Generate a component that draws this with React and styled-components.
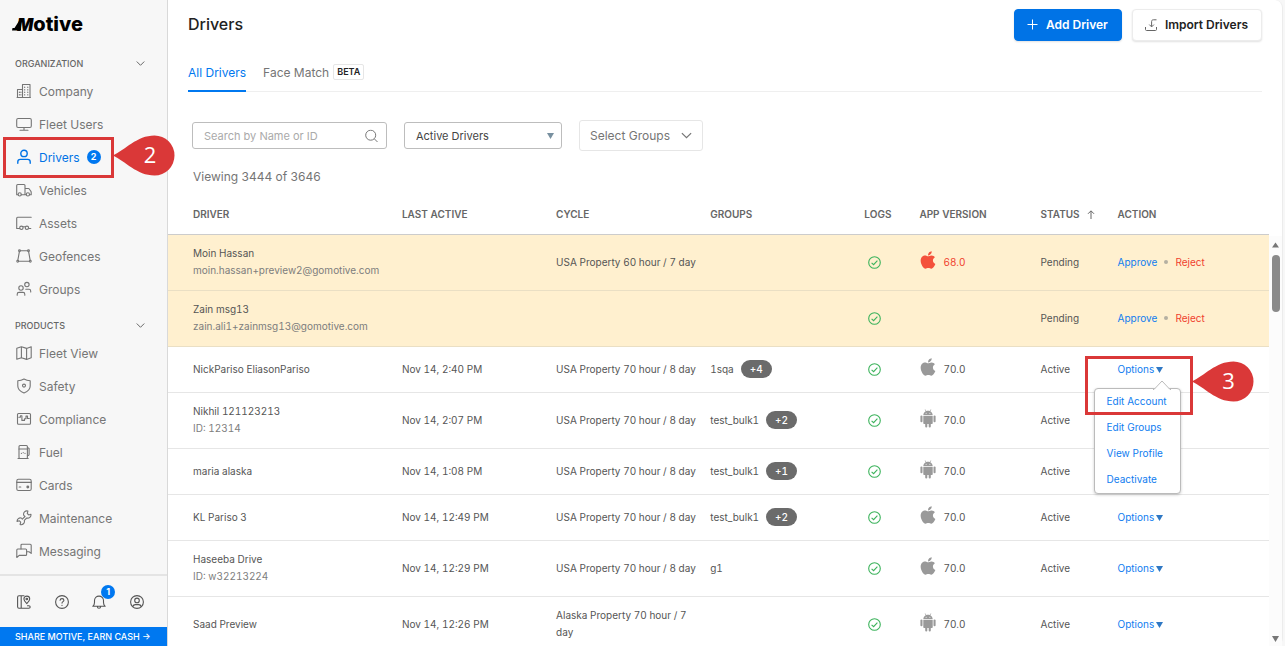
import { useState } from "react";
import styled, { createGlobalStyle, css } from "styled-components";
import { FaApple } from "react-icons/fa";

const GlobalStyle = createGlobalStyle`
  *,
  *::before,
  *::after {
    box-sizing: border-box;
  }

  body {
    margin: 0;
    background-color: #f7f7f7;
    color: #555;
    font-family: Inter, "Liberation Sans", sans-serif;
    font-size: 10px;
    line-height: 17px;
  }

  button,
  input,
  select {
    font-family: inherit;
  }

  a {
    text-decoration: none;
  }
`;

// --- Layout ---
const Page = styled.div`
  display: flex;
  height: 100vh;
  overflow: hidden;
`;

const Sidebar = styled.aside`
  display: flex;
  flex-direction: column;
  flex: 0 0 168px;
  background-color: #f7f7f7;
  border-right: 1px solid #d9d9d9;
`;

const Main = styled.main`
  display: flex;
  flex-direction: column;
  flex: 1;
  min-width: 0;
  margin-right: 2px;
  background-color: #fff;
  border-right: 1px solid #ececec;
  border-radius: 0 8px 8px 0;
`;

// --- Sidebar ---
const Brand = styled.a`
  display: flex;
  align-items: center;
  height: 52px;
  padding: 0 0 4px 12px;
  color: #000;
`;

const BrandTail = styled.svg`
  width: 9px;
  height: 16px;
  margin-right: -4px;
`;

const BrandName = styled.span`
  font-size: 20px;
  font-weight: 800;
  line-height: 24px;

  em {
    font-size: 17px;
    font-weight: 900;
  }
`;

const Nav = styled.nav`
  flex: 1;
`;

const NavHeading = styled.button`
  display: flex;
  align-items: center;
  justify-content: space-between;
  width: 100%;
  height: 22px;
  margin-top: ${(props) => (props.$spaced ? "9px" : "0")};
  padding: 0 22px 0 15px;
  border: 0;
  background: none;
  color: #666;
  font-size: 9px;
  font-weight: 500;
`;

const NavList = styled.ul`
  margin: 0;
  padding: 0;
  list-style: none;
`;

const NavItem = styled.li`
  position: relative;
`;

const NavLink = styled.a`
  display: flex;
  align-items: center;
  gap: 7px;
  height: 33px;
  padding: 1px 0 0 16px;
  color: ${(props) => (props.$active ? "#0073e6" : "#757575")};
  font-size: 12px;

  svg {
    margin-bottom: 1px;
  }
`;

const NavBadge = styled.span`
  width: 14px;
  height: 14px;
  border-radius: 50%;
  background-color: #0078f0;
  color: #fff;
  font-size: 9px;
  font-weight: 700;
  line-height: 14px;
  text-align: center;
`;

const SidebarTools = styled.div`
  display: flex;
  align-items: center;
  justify-content: space-between;
  height: 53px;
  padding: 0 22px 0 16px;
  border-top: 2px solid #e4e4e4;
`;

const ToolButton = styled.button`
  position: relative;
  display: flex;
  padding: 0;
  border: 0;
  background: none;
  color: #555;
`;

const ToolBadge = styled(NavBadge)`
  position: absolute;
  top: -9px;
  left: 10px;
`;

const ShareLink = styled.a`
  height: 19px;
  padding-left: 15px;
  background-color: #0078f0;
  color: #fff;
  font-size: 9px;
  font-weight: 500;
  line-height: 20px;
`;

// --- Page header ---
const Header = styled.header`
  display: flex;
  align-items: center;
  justify-content: space-between;
  height: 49px;
  padding: 0 20px;
`;

const Title = styled.h1`
  margin: 0;
  color: #222;
  font-size: 16px;
  font-weight: 500;
`;

const HeaderActions = styled.div`
  display: flex;
  gap: 10px;
`;

const ActionButton = styled.button`
  display: flex;
  align-items: center;
  justify-content: center;
  gap: 8px;
  height: 32px;
  padding: 0 13px 0 12px;
  border: 1px solid ${(props) => (props.$primary ? "#0073e6" : "#ececec")};
  border-radius: 4px;
  background-color: ${(props) => (props.$primary ? "#0073e6" : "#fff")};
  color: ${(props) => (props.$primary ? "#fff" : "#222")};
  box-shadow: 0 1px 2px rgba(0, 0, 0, 0.12);
  font-size: 12px;
  font-weight: 600;
`;

const Tabs = styled.nav`
  display: flex;
  gap: 17px;
  height: 43px;
  margin: 0 20px;
  border-bottom: 1px solid #efefef;
`;

const Tab = styled.a`
  display: flex;
  align-items: center;
  gap: 4px;
  height: 43px;
  padding-top: 5px;
  border-bottom: 2px solid ${(props) => (props.$active ? "#0078f0" : "transparent")};
  color: ${(props) => (props.$active ? "#0078f0" : "#757575")};
  font-size: 12px;
`;

const BetaTag = styled.span`
  padding: 0 3px;
  border: 1px solid #e6e6e6;
  border-radius: 2px;
  color: #222;
  font-size: 9px;
  font-weight: 600;
  line-height: 14px;
`;

// --- Filters ---
const Filters = styled.div`
  display: flex;
  align-items: center;
  gap: 17px;
  padding: 28px 24px 0;
`;

const fieldBox = css`
  width: 100%;
  height: 27px;
  border: 1px solid #bdbdbd;
  border-radius: 3px;
  background-color: #fff;
  font-size: 11px;
`;

const Field = styled.label`
  position: relative;
  width: ${(props) => props.$width};

  svg {
    position: absolute;
    top: 50%;
    right: ${(props) => props.$iconRight};
    transform: translateY(-50%);
    pointer-events: none;
  }
`;

const SearchInput = styled.input`
  ${fieldBox}
  padding: 0 30px 0 11px;
  color: #555;

  &::placeholder {
    color: #aaa;
    opacity: 1;
  }
`;

const StatusSelect = styled.select`
  ${fieldBox}
  padding: 0 24px 0 11px;
  appearance: none;
  color: #444;
`;

const GroupsButton = styled.button`
  display: flex;
  align-items: center;
  gap: 11px;
  height: 31px;
  padding: 0 10px;
  border: 1px solid #e6e6e6;
  border-radius: 3px;
  background-color: #fff;
  color: #757575;
  font-size: 12px;
`;

const Summary = styled.p`
  height: 44px;
  margin: 0;
  padding: 17px 25px 0;
  color: #757575;
  font-size: 12px;
`;

// --- Table ---
const TableArea = styled.div`
  display: flex;
  flex: 1;
  min-height: 0;
`;

const TableClip = styled.div`
  flex: 1;
  overflow: hidden;
`;

const Table = styled.table`
  width: 100%;
  border-spacing: 0;
  table-layout: fixed;
  font-variant-numeric: tabular-nums;
`;

const HeadCell = styled.th`
  height: 40px;
  padding: 0;
  border-bottom: 1px solid #ccc;
  color: #666;
  font-size: 10px;
  font-weight: 600;
  text-align: left;

  &:first-child {
    padding-left: 25px;
  }

  svg {
    margin-left: 7px;
    vertical-align: -1px;
  }
`;

const Row = styled.tr`
  height: 46px;
  background-color: ${(props) => (props.$pending ? "#fff0cf" : "#fff")};
`;

const Cell = styled.td`
  padding: 10px 8px 11px 0;
  border-bottom: 1px solid #e6e6e6;
  vertical-align: middle;

  ${Row}[data-pending="true"] & {
    border-bottom-color: #eadfc4;
  }

  &:first-child {
    padding-left: 25px;
  }
`;

const DriverNote = styled.div`
  color: #7d7d7d;
`;

const Inline = styled.div`
  display: flex;
  align-items: center;
  gap: ${(props) => props.$gap || "7px"};
  height: 17px;
  color: ${(props) => props.$color || "inherit"};
`;

const CountPill = styled.span`
  padding: 0 9px;
  border-radius: 9px;
  background-color: #6b6b6b;
  color: #fff;
  font-weight: 500;
  line-height: 18px;
`;

const LogsMark = styled.span`
  display: flex;
  padding-left: 4px;
`;

const Platform = styled.span`
  display: flex;
  justify-content: center;
  width: 17px;
  padding-bottom: 4px;
  color: ${(props) => (props.$outdated ? "#f4513b" : "#999")};

  svg {
    flex-shrink: 0;
  }
`;

const TextButton = styled.button`
  padding: 0;
  border: 0;
  background: none;
  color: ${(props) => (props.$danger ? "#f0412e" : "#0f7df0")};
  font-size: 10px;
  line-height: 17px;

  svg {
    margin-left: 2px;
  }
`;

const Bullet = styled.span`
  width: 4px;
  height: 4px;
  border-radius: 50%;
  background-color: #b5b0a2;
`;

const MenuAnchor = styled.div`
  position: relative;
  width: max-content;
`;

const Menu = styled.ul`
  position: absolute;
  top: 27px;
  left: -24px;
  z-index: 2;
  width: 87px;
  margin: 0;
  padding: 0;
  border: 1px solid #bbb;
  border-radius: 4px;
  background-color: #fff;
  box-shadow: 0 1px 3px rgba(0, 0, 0, 0.2);
  list-style: none;
`;

const MenuArrow = styled.svg`
  position: absolute;
  top: -9px;
  right: 9px;
`;

const MenuItem = styled.li`
  display: flex;
  align-items: center;
  height: 26px;
  padding-left: 12px;
`;

const Scrollbar = styled.div`
  display: flex;
  flex-direction: column;
  align-items: center;
  width: 13px;
  margin-top: 41px;
  padding: 6px 0 4px;
  background-color: #fcfcfc;
`;

const ScrollThumb = styled.div`
  width: 8px;
  height: 57px;
  margin: 7px 0 auto;
  border-radius: 4px;
  background-color: #8a8a8a;
`;

// --- Step callouts ---
const Callout = styled.div`
  position: absolute;
  top: ${(props) => props.$top};
  left: ${(props) => props.$left};
  z-index: 3;
  width: ${(props) => props.$width};
  height: ${(props) => props.$height};
  border: 3px solid #da3838;
  pointer-events: none;
`;

const CalloutPin = styled.div`
  position: absolute;
  top: ${(props) => props.$top};
  left: calc(100% + 2px);
  width: 62px;
  height: 41px;
  padding-left: 12px;
  color: #fff;
  font-family: "Open Sans", sans-serif;
  font-size: 22px;
  line-height: 39px;
  text-align: center;

  svg {
    position: absolute;
    inset: 0;
  }

  span {
    position: relative;
  }
`;

// --- Icons ---
const Icon = ({ size = 16, children }) => (
  <svg
    width={size}
    height={size}
    viewBox="0 0 16 16"
    fill="none"
    stroke="currentColor"
    strokeWidth="1.1"
    strokeLinecap="round"
    strokeLinejoin="round"
    aria-hidden="true"
  >
    {children}
  </svg>
);

const Chevron = ({ size = 9 }) => (
  <svg width={size} height={size} viewBox="0 0 10 10" fill="none" stroke="currentColor" strokeWidth="1.1" aria-hidden="true">
    <path d="M0.8 2.8 5 7 9.2 2.8" />
  </svg>
);

const Triangle = ({ color = "#2f78c4", up, width = 7 }) => (
  <svg width={width} height="6" viewBox="0 0 7 6" fill={color} aria-hidden="true">
    <path d={up ? "M0 5.5h7L3.5 0.5z" : "M0 0h7L3.5 6z"} />
  </svg>
);

const CheckCircle = () => (
  <svg width="13" height="13" viewBox="0 0 13 13" fill="none" stroke="#3cb35c" strokeWidth="1.1" aria-label="OK">
    <circle cx="6.5" cy="6.5" r="5.8" />
    <path d="M3.6 6.8 5.6 8.7 9.4 4.6" />
  </svg>
);

const AndroidIcon = () => (
  <svg width="16" height="19" viewBox="0 0 16 19" fill="currentColor" aria-hidden="true">
    <path d="M3.3 6.2C3.4 4.200 4.400 2.900 5.700 2.200L4.700.6l.4-.3 1.100 1.700c1.100-.4 2.500-.4 3.600 0L10.900.3l.4.3-1 1.600c1.300.7 2.300 2 2.400 4z" />
    <path d="M3.300 6.900h9.400v7c0 .6-.4 1-1 1h-.9v2.600a1 1 0 0 1-2.100 0v-2.600H7.300v2.600a1 1 0 0 1-2.100 0v-2.600h-.9c-.6 0-1-.4-1-1z" />
    <rect x="0.400" y="6.600" width="2.100" height="6.600" rx="1" />
    <rect x="13.500" y="6.600" width="2.100" height="6.600" rx="1" />
    <circle cx="6.100" cy="4.200" r="0.500" fill="#fff" />
    <circle cx="9.900" cy="4.200" r="0.500" fill="#fff" />
  </svg>
);

const icons = {
  company: (
    <>
      <path d="M1.5 14.5v-8h5v8M6.5 14.5v-13h7.5v13M1 14.5h13.5" />
      <path d="M3.4 9v.5M3.4 11.5v.5M4.9 9v.5M4.9 11.5v.5M8.7 4v.4M8.7 6.5v.4M8.7 9v.4M8.7 11.5v.4M11.8 4v.4M11.8 6.5v.4M11.8 9v.4M11.8 11.5v.4" />
    </>
  ),
  monitor: (
    <>
      <rect x="0.7" y="2.5" width="14.6" height="9" rx="1.4" />
      <path d="M8 11.5v2.8M4 14.3h8" />
    </>
  ),
  user: (
    <g strokeWidth="1.4">
      <circle cx="8" cy="4.4" r="3.2" />
      <path d="M1.8 14.2v-1.4c0-1.5 1-2.4 2.5-2.4h7.4c1.5 0 2.5.9 2.5 2.4v1.4" />
    </g>
  ),
  truck: (
    <>
      <path d="M2 12.7H.7V3.5c0-.6.4-1 1-1H8c.6 0 1 .4 1 1v9.2M5.2 12.7h5M9 6.5h3.4c.4 0 .7.2.9.5l1.5 2.2c.3.4.4.7.4 1.2v2.3h-1.6" />
      <circle cx="3.7" cy="12.4" r="1.6" />
      <circle cx="11.9" cy="12.4" r="1.6" />
    </>
  ),
  trailer: (
    <>
      <path d="M15.2 2.3H1.6c-.5 0-.9.4-.9.9v10.3h2.8M14.8 13.5h-1.5M7.3 11.8h1.5" />
      <circle cx="5.4" cy="12.8" r="1.7" />
      <circle cx="10.9" cy="12.8" r="1.7" />
    </>
  ),
  geofence: (
    <>
      <path d="M4.2 2.8h7.6M3.4 3.7 1.8 12.3M12.6 3.7l1.6 8.6M2.6 13.3h10.8" />
      <circle cx="3.5" cy="2.8" r="0.9" />
      <circle cx="12.5" cy="2.8" r="0.9" />
      <circle cx="1.7" cy="13.3" r="0.9" />
      <circle cx="14.3" cy="13.3" r="0.9" />
    </>
  ),
  groups: (
    <>
      <circle cx="5" cy="7" r="2.2" />
      <path d="M1.2 14.3v-1.1c0-1 .7-1.8 1.8-1.8h4c1.1 0 1.8.8 1.8 1.8v1.1" />
      <circle cx="10.9" cy="3.6" r="2.2" />
      <path d="M9.8 8.2H13c1 0 1.700.7 1.700 1.700v1" />
    </>
  ),
  map: (
    <path d="M0.8 3.2 5.4 1.8l5.2 1.6 4.6-1.6v11L10.6 14.4 5.4 12.8.8 14.3zM5.4 1.8v11M10.6 3.4v11" />
  ),
  shield: (
    <>
      <path d="M8 1.1c2 1.1 3.9 1.6 6.2 1.7v5.3c0 3.3-2.6 5.6-6.2 6.9-3.6-1.3-6.2-3.6-6.2-6.9V2.8C4.1 2.7 6 2.2 8 1.1z" />
      <circle cx="8" cy="7.6" r="1.5" />
    </>
  ),
  compliance: (
    <>
      <rect x="1.5" y="2.5" width="13" height="10.8" rx="1" />
      <path d="M2.8 6.2h1.6v-1.4h1.5v4.6h2.6V7.8H10v-2.7h1.5v2.4h1.8" />
    </>
  ),
  fuel: (
    <>
      <rect x="3" y="1.5" width="8.4" height="13" rx="1" />
      <path d="M3 5h8.4M2 14.5h10.2M5.4 9.2v.3M7.2 8.6v.2M9 9.2v.3M11.4 3.5l1.7 1v6c0 .8-.6 1.2-1.7 1.2" />
    </>
  ),
  card: (
    <>
      <rect x="0.8" y="2.3" width="14.4" height="11.2" rx="1.6" />
      <path d="M0.8 5.4h14.4M3.2 10h1.6" />
      <circle cx="11.8" cy="10" r="0.9" fill="currentColor" />
    </>
  ),
  wrench: (
    <path d="M11.900 1.100a3.300 3.300 0 0 0-4.100 4.300L9 6.500 6.300 9.100 5.300 8a3.300 3.300 0 0 0-4.200 3.400l2.300-.6 1.300 1.300-.6 2.400a3.300 3.300 0 0 0 4.200-4.100L10.700 8a3.300 3.300 0 0 0 4.200-3.800l-2.200.7-1.400-1.400z" />
  ),
  messages: (
    <>
      <path d="M5 5.9V2.2c0-.6.4-1 1-1h8.2c.6 0 1 .4 1 1v8.200l-2.200-1.600h-1.900" />
      <path d="M0.8 14.5V7c0-.6.4-1 1-1h7.800c.6 0 1 .4 1 1v4.400c0 .6-.4 1-1 1H3.200z" />
    </>
  ),
  guide: (
    <>
      <path d="M8 1.8H3c-.8 0-1.400.6-1.400 1.400v9.600c0 .8.6 1.400 1.400 1.400h9.800c.8 0 1.400-.5 1.400-1.200s-.6-1.200-1.400-1.200h-1.300M5.200 1.800v12.400" />
      <path d="M10.800 9.600C9 7.900 7.900 6.500 7.900 5a2.900 2.900 0 0 1 5.800 0c0 1.500-1.100 2.900-2.900 4.600z" />
      <circle cx="10.8" cy="5" r="0.8" />
    </>
  ),
  help: (
    <>
      <circle cx="8" cy="8" r="6.4" />
      <path d="M6.100 6.300c.1-1.100.8-1.700 1.900-1.700s1.900.7 1.900 1.600c0 1.300-1.900 1.500-1.900 2.900M8 11.200v.2" />
    </>
  ),
  bell: (
    <path d="M1.800 12.300h12.400c-1.200-1-1.700-2.100-1.700-3.900V6.600a4.500 4.500 0 0 0-9 0v1.800c0 1.800-.5 2.900-1.700 3.900zM6.300 12.500c.1 1.100.8 1.800 1.700 1.800s1.600-.7 1.700-1.800" />
  ),
  account: (
    <>
      <circle cx="8" cy="8" r="6.4" />
      <circle cx="8" cy="6.4" r="2.3" />
      <path d="M3.800 12.500c.4-1.300 1.300-1.900 2.500-1.900h3.400c1.200 0 2.100.6 2.500 1.900" />
    </>
  ),
};

const ImportIcon = () => (
  <svg width="12" height="12" viewBox="0 0 12 12" fill="none" stroke="#666" aria-hidden="true">
    <path d="M0.500 8v2.500c0 .6.4 1 1 1h9c.6 0 1-.4 1-1V8M11.500 0.800H8.300c-1 0-1.700.6-1.700 1.600v5.300M4.300 5.600l2.300 2.300 2.300-2.300" />
  </svg>
);

const Pin = ({ top, children }) => (
  <CalloutPin $top={top}>
    <svg width="62" height="41" viewBox="0 0 62 41" fill="#da3838" aria-hidden="true">
      <path d="M0 20.500C12 15 24 0.500 41.500 0.500a20 20 0 0 1 0 40C24 40.500 12 26 0 20.500z" />
    </svg>
    <span>{children}</span>
  </CalloutPin>
);

// --- Data ---
const organization = [
  { label: "Company", icon: "company" },
  { label: "Fleet Users", icon: "monitor" },
  { label: "Drivers", icon: "user", badge: 2, active: true },
  { label: "Vehicles", icon: "truck" },
  { label: "Assets", icon: "trailer" },
  { label: "Geofences", icon: "geofence" },
  { label: "Groups", icon: "groups" },
];

const products = [
  { label: "Fleet View", icon: "map" },
  { label: "Safety", icon: "shield" },
  { label: "Compliance", icon: "compliance" },
  { label: "Fuel", icon: "fuel" },
  { label: "Cards", icon: "card" },
  { label: "Maintenance", icon: "wrench" },
  { label: "Messaging", icon: "messages" },
];

const columns = [
  { label: "DRIVER", width: "21.25%" },
  { label: "LAST ACTIVE", width: "14%" },
  { label: "CYCLE", width: "14%" },
  { label: "GROUPS", width: "14%" },
  { label: "LOGS", width: "5%" },
  { label: "APP VERSION", width: "11%" },
  { label: "STATUS", width: "7%", sorted: true },
  { label: "ACTION", width: "13.75%" },
];

const usa70 = "USA Property 70 hour / 8 day";

const drivers = [
  { name: "Moin Hassan", note: "moin.hassan+preview2@gomotive.com", cycle: "USA Property 60 hour / 7 day", os: "apple", version: "68.0", outdated: true, pending: true },
  { name: "Zain msg13", note: "zain.ali1+zainmsg13@gomotive.com", pending: true },
  { name: "NickPariso EliasonPariso", last: "Nov 14, 2:40 PM", cycle: usa70, group: "1sqa", more: "+4", os: "apple", version: "70.0", menuOpen: true },
  { name: "Nikhil 121123213", note: "ID: 12314", last: "Nov 14, 2:07 PM", cycle: usa70, group: "test_bulk1", more: "+2", os: "android", version: "70.0" },
  { name: "maria alaska", last: "Nov 14, 1:08 PM", cycle: usa70, group: "test_bulk1", more: "+1", os: "android", version: "70.0" },
  { name: "KL Pariso 3", last: "Nov 14, 12:49 PM", cycle: usa70, group: "test_bulk1", more: "+2", os: "apple", version: "70.0" },
  { name: "Haseeba Drive", note: "ID: w32213224", last: "Nov 14, 12:29 PM", cycle: usa70, group: "g1", os: "apple", version: "70.0" },
  { name: "Saad Preview", last: "Nov 14, 12:26 PM", cycle: "Alaska Property 70 hour / 7 day", os: "android", version: "70.0" },
];

const menuItems = ["Edit Account", "Edit Groups", "View Profile", "Deactivate"];

// --- Components ---
const NavSection = ({ title, items, spaced }) => (
  <>
    <NavHeading $spaced={spaced}>
      {title}
      <Chevron />
    </NavHeading>
    <NavList>
      {items.map((item) => (
        <NavItem key={item.label}>
          <NavLink href="#" $active={item.active}>
            <Icon>{icons[item.icon]}</Icon>
            {item.label}
            {item.badge && <NavBadge>{item.badge}</NavBadge>}
          </NavLink>
          {item.active && (
            <Callout $top="-3px" $left="3px" $width="111px" $height="41px">
              <Pin top="-5px">2</Pin>
            </Callout>
          )}
        </NavItem>
      ))}
    </NavList>
  </>
);

const RowAction = ({ driver }) => {
  if (driver.pending) {
    return (
      <Inline>
        <TextButton>Approve</TextButton>
        <Bullet />
        <TextButton $danger>Reject</TextButton>
      </Inline>
    );
  }

  return (
    <MenuAnchor>
      <TextButton aria-haspopup="menu" aria-expanded={Boolean(driver.menuOpen)}>
        Options
        <Triangle />
      </TextButton>
      {driver.menuOpen && (
        <>
          <Menu>
            <MenuArrow width="18" height="10" viewBox="0 0 18 10" fill="#fff" stroke="#bbb" aria-hidden="true">
              <path d="M0 9.500h1L9 1l8 8.500h1" />
            </MenuArrow>
            {menuItems.map((item) => (
              <MenuItem key={item}>
                <TextButton>{item}</TextButton>
              </MenuItem>
            ))}
          </Menu>
          <Callout $top="-5px" $left="-33px" $width="108px" $height="59px">
            <Pin top="2px">3</Pin>
          </Callout>
        </>
      )}
    </MenuAnchor>
  );
};

const DriverRow = ({ driver }) => (
  <Row $pending={driver.pending} data-pending={Boolean(driver.pending)}>
    <Cell>
      {driver.name}
      {driver.note && <DriverNote>{driver.note}</DriverNote>}
    </Cell>
    <Cell>{driver.last}</Cell>
    <Cell>{driver.cycle}</Cell>
    <Cell>
      <Inline>
        {driver.group}
        {driver.more && <CountPill>{driver.more}</CountPill>}
      </Inline>
    </Cell>
    <Cell>
      <Inline>
        <LogsMark>
          <CheckCircle />
        </LogsMark>
      </Inline>
    </Cell>
    <Cell>
      {driver.os && (
        <Inline $color={driver.outdated && "#f0412e"}>
          <Platform $outdated={driver.outdated}>
            {driver.os === "apple" ? <FaApple size={20} /> : <AndroidIcon />}
          </Platform>
          {driver.version}
        </Inline>
      )}
    </Cell>
    <Cell>{driver.pending ? "Pending" : "Active"}</Cell>
    <Cell>
      <RowAction driver={driver} />
    </Cell>
  </Row>
);

const App = () => {
  const [query, setQuery] = useState("");

  return (
    <Page>
      <GlobalStyle />
      <Sidebar>
        <Brand href="#">
          <BrandTail viewBox="0 0 9 16" aria-hidden="true">
            <path d="M0 14.500 0.500 12h2L7 5l2 1v8.500z" />
          </BrandTail>
          <BrandName>
            <em>M</em>otive
          </BrandName>
        </Brand>
        <Nav>
          <NavSection title="ORGANIZATION" items={organization} />
          <NavSection title="PRODUCTS" items={products} spaced />
        </Nav>
        <SidebarTools>
          <ToolButton aria-label="Guide">
            <Icon>{icons.guide}</Icon>
          </ToolButton>
          <ToolButton aria-label="Help">
            <Icon>{icons.help}</Icon>
          </ToolButton>
          <ToolButton aria-label="Notifications">
            <Icon>{icons.bell}</Icon>
            <ToolBadge>1</ToolBadge>
          </ToolButton>
          <ToolButton aria-label="Account">
            <Icon>{icons.account}</Icon>
          </ToolButton>
        </SidebarTools>
        <ShareLink href="#">SHARE MOTIVE, EARN CASH →</ShareLink>
      </Sidebar>

      <Main>
        <Header>
          <Title>Drivers</Title>
          <HeaderActions>
            <ActionButton $primary>
              <svg width="11" height="11" viewBox="0 0 11 11" stroke="currentColor" aria-hidden="true">
                <path d="M5.500 0.500v10M0.500 5.500h10" />
              </svg>
              Add Driver
            </ActionButton>
            <ActionButton>
              <ImportIcon />
              Import Drivers
            </ActionButton>
          </HeaderActions>
        </Header>
        <Tabs>
          <Tab href="#" $active>
            All Drivers
          </Tab>
          <Tab href="#">
            Face Match <BetaTag>BETA</BetaTag>
          </Tab>
        </Tabs>
        <Filters>
          <Field $width="195px" $iconRight="9px">
            <SearchInput
              type="text"
              aria-label="Search drivers"
              placeholder="Search by Name or ID"
              value={query}
              onChange={(event) => setQuery(event.target.value)}
            />
            <svg width="13" height="13" viewBox="0 0 13 13" fill="none" stroke="#777" aria-hidden="true">
              <circle cx="5.700" cy="5.700" r="5" />
              <path d="M9.400 9.400 12.500 12.500" />
            </svg>
          </Field>
          <Field $width="158px" $iconRight="8px">
            <StatusSelect aria-label="Driver status" defaultValue="active">
              <option value="active">Active Drivers</option>
            </StatusSelect>
            <Triangle color="#7890a0" />
          </Field>
          <GroupsButton>
            Select Groups
            <Chevron size={11} />
          </GroupsButton>
        </Filters>
        <Summary>Viewing 3444 of 3646</Summary>
        <TableArea>
          <TableClip>
            <Table>
              <colgroup>
                {columns.map((column) => (
                  <col key={column.label} width={column.width} />
                ))}
              </colgroup>
              <thead>
                <tr>
                  {columns.map((column) => (
                    <HeadCell key={column.label} scope="col">
                      {column.label}
                      {column.sorted && (
                        <svg width="8" height="9" viewBox="0 0 8 9" fill="none" stroke="currentColor" aria-hidden="true">
                          <path d="M4 9V1M1 3.800 4 .8l3 3" />
                        </svg>
                      )}
                    </HeadCell>
                  ))}
                </tr>
              </thead>
              <tbody>
                {drivers.map((driver) => (
                  <DriverRow key={driver.name} driver={driver} />
                ))}
              </tbody>
            </Table>
          </TableClip>
          <Scrollbar aria-hidden="true">
            <Triangle color="#777" up />
            <ScrollThumb />
            <Triangle color="#777" />
          </Scrollbar>
        </TableArea>
      </Main>
    </Page>
  );
};

export default App;
